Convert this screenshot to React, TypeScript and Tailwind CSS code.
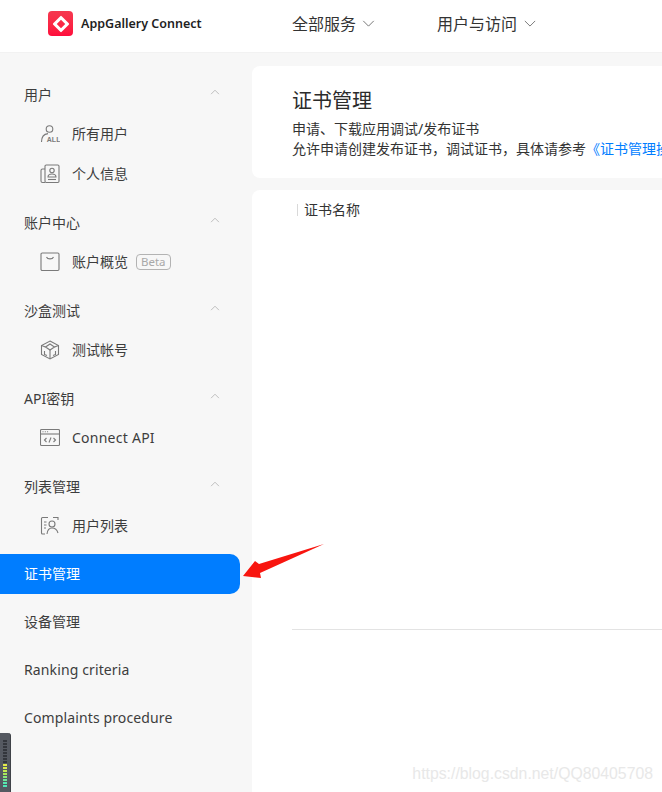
import { ReactNode } from 'react';

const FONT = 'font-["Noto_Sans","Noto_Sans_CJK_SC",sans-serif]';

const Chevron = ({ up, className }: { up?: boolean; className: string }) => (
    <svg viewBox="0 0 14 8" className={className} fill="none" stroke="currentColor" strokeWidth="1">
        <path d={up ? 'M1.5 7 L7 1.5 L12.5 7' : 'M1 1 L7 7 L13 1'} />
    </svg>
);

const IconBox = ({ children }: { children: ReactNode }) => (
    <svg viewBox="0 0 20 20" className="w-5 h-5 shrink-0 text-[#7a7a7a]" fill="none" stroke="currentColor" strokeWidth="1.1">
        {children}
    </svg>
);

const AllUsersIcon = () => (
    <IconBox>
        <circle cx="9.5" cy="5" r="3.3" />
        <path d="M1.5 18 C1.5 13 4 10 8 9.6" />
        <text x="6.8" y="18" fontSize="7" fill="currentColor" stroke="none" fontWeight="600" fontFamily="Liberation Sans">ALL</text>
    </IconBox>
);

const ProfileIcon = () => (
    <IconBox>
        <rect x="5" y="1" width="14" height="17.5" rx="1.2" />
        <path d="M5 5 H2.5 Q1 5 1 6.5 V17 Q1 18.5 2.5 18.5 H5" />
        <circle cx="12" cy="6.5" r="2.2" />
        <path d="M8 13 C8 10.5 10 10 12 10 C14 10 16 10.5 16 13 Z" />
        <path d="M8 15.5 H16" />
    </IconBox>
);

const AccountIcon = () => (
    <IconBox>
        <rect x="1" y="1" width="18" height="17.5" rx="1.2" />
        <path d="M6.5 5 C7.5 7.5 12.5 7.5 13.5 5" />
    </IconBox>
);

const CubeIcon = () => (
    <IconBox>
        <path d="M10 1 L18.5 5.5 V14.5 L10 19 L1.5 14.5 V5.5 Z" />
        <path d="M10 4 L14.5 7 L10 10 L5.5 7 Z" />
        <path d="M1.5 5.5 L5.5 7 M18.5 5.5 L14.5 7 M10 10 V19" />
        <path d="M4.5 11 V14.5 L7 15.5 M15.5 11 V14.5 L13 15.5" />
    </IconBox>
);

const ApiIcon = () => (
    <IconBox>
        <rect x="0.5" y="1.5" width="19" height="16" rx="1" />
        <path d="M0.5 6 H19.5" />
        <path d="M2.5 3.8 H3.5 M4.8 3.8 H5.8 M7.1 3.8 H8.1" />
        <path d="M6.5 10 L4.5 12 L6.5 14 M13.5 10 L15.5 12 L13.5 14 M11 9.5 L9 14.5" />
    </IconBox>
);

const ListIcon = () => (
    <IconBox>
        <path d="M8 1.5 H2.5 Q1.5 1.5 1.5 2.5 V17 Q1.5 18 2.5 18 H5 M13 1.5 H18 V4" />
        <path d="M4 6 H6.5 M4 9 H6.5 M4 12 H6" />
        <circle cx="12" cy="8" r="3" />
        <path d="M7 18 C7.5 13.5 9.5 12 12 12 C14.5 12 17 13.5 18 17" />
    </IconBox>
);

const SubItem = ({ icon, label, badge, latin }: { icon: ReactNode; label: string; badge?: string; latin?: boolean }) => (
    <div className="h-10 flex items-center pl-10 gap-3 text-sm text-[#3d3d3d]">
        {icon}
        <span className={latin ? 'tracking-[0.25px]' : ''}>{label}</span>
        {badge && <span className="-ml-1 h-[16px] px-1 flex items-center border border-[#b3b3b3] rounded text-[11.5px] text-[#a8a8a8]">{badge}</span>}
    </div>
);

const NavGroup = ({ title, children }: { title: string; children: ReactNode }) => (
    <div className="flex flex-col">
        <div className="h-10 flex items-center justify-between pl-6 pr-[32px] text-sm text-[#3d3d3d]">
            <span className="mt-px">{title}</span>
            <Chevron up className="w-[10px] h-[6px] text-[#a8a8a8] -mt-1" />
        </div>
        {children}
    </div>
);

const NavLink = ({ label, active, latin }: { label: string; active?: boolean; latin?: boolean }) => (
    <div className={`h-10 w-[240px] flex items-center pl-6 text-sm rounded-r-[10px] ${active ? 'bg-[#007dff] text-white' : 'text-[#3d3d3d]'} ${latin ? 'tracking-[0.12px]' : ''}`}>
        {label}
    </div>
);

const MeterWidget = () => {
    const bars = ['#33363c', '#33363c', '#33363c', '#33363c', '#33363c', '#33363c', '#33363c', '#33363c', '#e4ea4a', '#d8ea4e', '#c4ea52', '#a8e85a', '#8ce878', '#6fe898', '#58e8b0', '#4fe8b8'];
    return (
        <div className="absolute left-0 top-[733px] w-[11px] h-[59px] bg-[#555961] rounded-tr-[3px] border-r border-[#3f4248] flex flex-col items-center gap-[1px] pt-[7px] overflow-hidden">
            {bars.map((color, i) => (
                <div key={i} className="w-[4px] h-[2px] shrink-0" style={{ backgroundColor: color }} />
            ))}
        </div>
    );
};

export default function App() {
    return (
        <div className={`relative w-[662px] h-[792px] overflow-hidden bg-[#f7f7f7] ${FONT}`}>
            <header className="h-[53px] pb-[5px] bg-white flex items-center border-b border-[#f2f2f2]">
                <div className="ml-12 w-[25px] h-[25px] rounded-[4px] bg-gradient-to-b from-[#f5384f] to-[#ff0a3c] flex items-center justify-center">
                    <div className="w-3 h-3 rotate-45 border-[3px] border-white rounded-[1px]" />
                </div>
                <span className="ml-2 mt-0.5 w-[120px] text-[12.5px] font-semibold whitespace-nowrap text-[#1f1f1f]">AppGallery Connect</span>
                <div className="ml-[91px] flex items-center gap-[6px] text-[#333333]">
                    <span className="text-base">全部服务</span>
                    <Chevron className="w-[13px] h-[7px] text-[#666666]" />
                </div>
                <div className="ml-[62px] flex items-center gap-[7px] text-[#333333]">
                    <span className="text-base">用户与访问</span>
                    <Chevron className="w-3 h-[7px] text-[#666666]" />
                </div>
            </header>

            <div className="flex">
                <aside className="w-[252px] shrink-0 pt-[21px] flex flex-col gap-2">
                    <NavGroup title="用户">
                        <SubItem icon={<AllUsersIcon />} label="所有用户" />
                        <SubItem icon={<ProfileIcon />} label="个人信息" />
                    </NavGroup>
                    <NavGroup title="账户中心">
                        <SubItem icon={<AccountIcon />} label="账户概览" badge="Beta" />
                    </NavGroup>
                    <NavGroup title="沙盒测试">
                        <SubItem icon={<CubeIcon />} label="测试帐号" />
                    </NavGroup>
                    <NavGroup title="API密钥">
                        <SubItem icon={<ApiIcon />} label="Connect API" latin />
                    </NavGroup>
                    <NavGroup title="列表管理">
                        <SubItem icon={<ListIcon />} label="用户列表" />
                    </NavGroup>
                    <NavLink label="证书管理" active />
                    <NavLink label="设备管理" />
                    <NavLink label="Ranking criteria" latin />
                    <NavLink label="Complaints procedure" latin />
                </aside>

                <main className="flex-1 min-w-0 pt-[13px] flex flex-col gap-3">
                    <section className="h-[112px] bg-white rounded-l-[8px] pl-10 pt-[21px] whitespace-nowrap overflow-hidden">
                        <h1 className="text-xl font-normal leading-[28px] text-[#2b2b2b]">证书管理</h1>
                        <p className="mt-1 text-sm leading-5 text-[#333333]">申请、下载应用调试/发布证书</p>
                        <p className="text-sm leading-5 text-[#333333]">
                            允许申请创建发布证书，调试证书，具体请参考
                            <span className="text-[#007dff]">《证书管理操作指南》</span>
                        </p>
                    </section>
                    <section className="h-[602px] bg-white rounded-tl-[8px] pl-10">
                        <div className="h-10 flex items-center gap-[6px] text-sm text-[#333333]">
                            <div className="w-px h-3 ml-[5px] bg-[#d9d9d9]" />
                            <span>证书名称</span>
                        </div>
                        <div className="mt-[399px] border-t border-[#e3e3e3]" />
                    </section>
                </main>
            </div>

            <svg viewBox="0 0 90 44" className="absolute left-[240px] top-[540px] w-[90px] h-[44px]">
                <polygon points="84,4 19,24 15,21 3,36 21,38 20,33" fill="#f8150f" />
            </svg>
            <MeterWidget />
            <span className="absolute right-[9px] top-[764px] text-[15.8px] leading-5 text-[#e8e8e8] font-['Liberation_Sans',sans-serif]">https://blog.csdn.net/QQ80405708</span>
        </div>
    );
}
